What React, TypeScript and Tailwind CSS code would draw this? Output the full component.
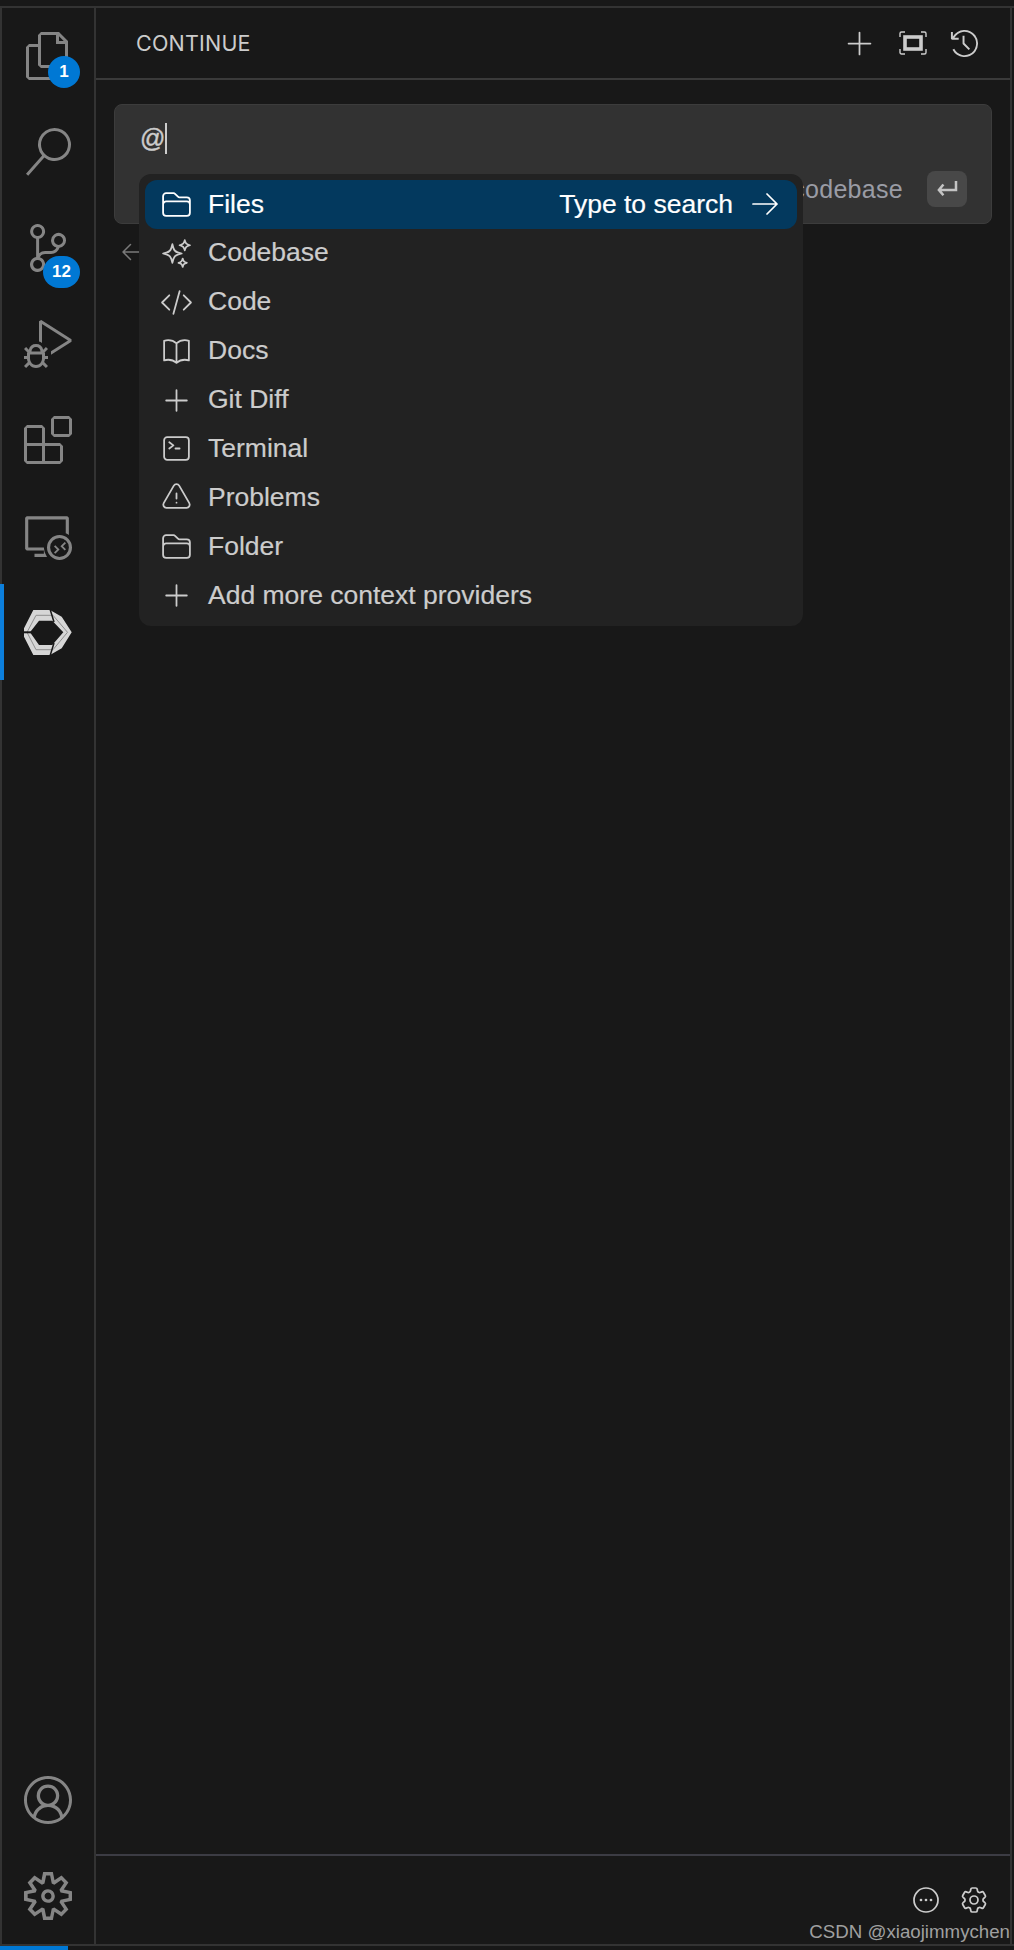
import React from 'react';
import {
  VscFiles,
  VscSearch,
  VscSourceControl,
  VscDebugAlt,
  VscExtensions,
  VscRemoteExplorer,
  VscAccount,
  VscSettingsGear,
  VscHistory,
} from 'react-icons/vsc';
import {
  HiOutlineFolder,
  HiOutlineSparkles,
  HiOutlineCodeBracket,
  HiOutlineBookOpen,
  HiOutlinePlus,
  HiOutlineCommandLine,
  HiOutlineExclamationTriangle,
  HiOutlineArrowRight,
  HiOutlineArrowLeft,
  HiOutlineEllipsisHorizontalCircle,
  HiOutlineCog6Tooth,
} from 'react-icons/hi2';

// Continue logo, hand traced
const ContinueLogo = () => (
  <svg viewBox="0 0 48 48" className="w-12 h-12" fill="none">
    <path
      fillRule="evenodd"
      fill="#d6d6d6"
      d="M9.3 2H26L37.7 8.7L47.7 24.3L37.7 40.3L26 47H9.3L0 28.7V20.3ZM15 12.7L6 24.3L15 37H28.3L39.3 24.3L28.3 12.7Z"
    />
    <path d="M12 7.3H29L43.5 24.3L29 41.7H12L3 24.3Z" stroke="#8f8f8f" strokeWidth="1" />
    <g stroke="#181818">
      <path d="M26 1L30 14M26 48L30 35" strokeWidth="1.5" />
      <path d="M-1 24.3H7" strokeWidth="2" />
    </g>
  </svg>
);

const ActivityItem = ({ children, active, badge }: { children: React.ReactNode; active?: boolean; badge?: string }) => (
  <div className="relative h-24 flex items-center justify-center text-[#858585]">
    {active && <div className="absolute left-[-2px] top-0 bottom-0 w-1 bg-[#0c7fdc]" />}
    {children}
    {badge && (
      <span
        className={`absolute h-8 rounded-full bg-[#0078d4] text-white text-[17px] font-bold flex items-center justify-center ${
          badge.length > 1 ? 'left-[41px] top-[56px] w-[37px]' : 'left-[46px] top-[48px] w-8'
        }`}
      >
        {badge}
      </span>
    )}
  </div>
);

const menuItems = [
  { label: 'Codebase', icon: HiOutlineSparkles },
  { label: 'Code', icon: HiOutlineCodeBracket },
  { label: 'Docs', icon: HiOutlineBookOpen },
  { label: 'Git Diff', icon: HiOutlinePlus },
  { label: 'Terminal', icon: HiOutlineCommandLine },
  { label: 'Problems', icon: HiOutlineExclamationTriangle },
  { label: 'Folder', icon: HiOutlineFolder },
  { label: 'Add more context providers', icon: HiOutlinePlus },
];

export default function App() {
  return (
    <div className="w-[1014px] h-[1950px] bg-[#181818] flex flex-col relative overflow-hidden font-['Liberation_Sans',sans-serif]">
      <div className="mt-[6px] h-[2px] bg-[#333333] shrink-0" />

      <div className="flex flex-1 min-h-0">
        {/* activity bar */}
        <div className="w-24 shrink-0 border-l-2 border-r-2 border-[#333333] flex flex-col justify-between">
          <div>
            <ActivityItem badge="1"><VscFiles size={48} /></ActivityItem>
            <ActivityItem><VscSearch size={48} /></ActivityItem>
            <ActivityItem badge="12"><VscSourceControl size={48} /></ActivityItem>
            <ActivityItem><VscDebugAlt size={48} /></ActivityItem>
            <ActivityItem><VscExtensions size={48} /></ActivityItem>
            <ActivityItem><VscRemoteExplorer size={48} /></ActivityItem>
            <ActivityItem active><ContinueLogo /></ActivityItem>
          </div>
          <div>
            <ActivityItem><VscAccount size={48} /></ActivityItem>
            <ActivityItem><VscSettingsGear size={48} /></ActivityItem>
          </div>
        </div>

        {/* side panel */}
        <div className="w-[914px] shrink-0 flex flex-col">
          <div className="h-[72px] shrink-0 border-b-2 border-[#3a3a3a] pl-10 pr-[30px] flex items-center justify-between text-[#cccccc]">
            <span className="font-['Inter',sans-serif] text-[21.5px] tracking-[0.2px]">CONTINUE</span>
            <div className="flex items-center gap-[22px]">
              <HiOutlinePlus size={35} strokeWidth={1.2} />
              <svg viewBox="0 0 28 24" className="w-7 h-6" fill="none" stroke="currentColor">
                <path d="M1 6V2.5A1.5 1.5 0 0 1 2.5 1H6M22 1h3.5A1.5 1.5 0 0 1 27 2.5V6M27 18v3.5a1.5 1.5 0 0 1-1.5 1.5H22M6 23H2.5A1.5 1.5 0 0 1 1 21.5V18" strokeWidth="1.4" />
                <rect x="6" y="6" width="16" height="12" strokeWidth="3.6" />
              </svg>
              <VscHistory size={31} />
            </div>
          </div>

          <div className="flex-1 min-h-0 px-[18px] pt-6">
            <div className="relative h-[120px] rounded-lg bg-[#323232] border border-[#3c3c3c]">
              <div className="absolute left-[25px] top-[18px] flex items-center text-[25px] text-[#cccccc] h-[31px] [-webkit-text-stroke:0.4px_#cccccc]">
                @<span className="w-[2px] h-[31px] bg-[#cccccc]" />
              </div>
              <div className="absolute right-6 bottom-[15px] flex items-center gap-6">
                <span className="text-[#9a9ca5] text-[25px] tracking-[0.3px]">codebase</span>
                <span className="w-10 h-9 rounded-lg bg-[#484848] flex items-center justify-center">
                  <svg viewBox="0 0 24 20" className="w-[22px] h-[18px]" fill="none" stroke="#c4c4c4" strokeWidth="2.8">
                    <path d="M22 1v10H3M8 5l-5 6 5 6" />
                  </svg>
                </span>
              </div>

              {/* context provider menu */}
              <div className="absolute left-[24px] top-[69px] z-10 w-[664px] p-[6px] rounded-xl bg-[#222222]">
                <div className="h-[48.9px] rounded-[12px] bg-[#03395e] text-white flex items-center pl-[15px] pr-[16px] [-webkit-text-stroke:0.2px_#ffffff]">
                  <HiOutlineFolder size={33} strokeWidth={1.3} />
                  <span className="ml-[15px] text-[26.5px]">Files</span>
                  <span className="ml-auto text-[26.5px]">Type to search</span>
                  <HiOutlineArrowRight size={32} strokeWidth={1.3} className="ml-[16px]" />
                </div>
                {menuItems.map(item => (
                  <div key={item.label} className="h-[48.9px] text-[#cccccc] flex items-center pl-[15px] [-webkit-text-stroke:0.2px_#cccccc]">
                    <item.icon size={33} strokeWidth={1.3} />
                    <span className="ml-[15px] text-[26.5px]">{item.label}</span>
                  </div>
                ))}
              </div>
            </div>
            <div className="mt-4 ml-[6px] text-[#7a7a7a]">
              <HiOutlineArrowLeft size={24} />
            </div>
          </div>

          <div className="h-[90px] shrink-0 border-t-2 border-[#3c3c44] pr-5 pt-[28px] flex justify-end gap-[16px] text-[#cccccc]">
            <HiOutlineEllipsisHorizontalCircle size={32} strokeWidth={1.3} />
            <HiOutlineCog6Tooth size={32} strokeWidth={1.3} />
          </div>
        </div>

        <div className="w-[2px] bg-[#333333] shrink-0" />
      </div>

      <div className="h-[2px] bg-[#333333] shrink-0" />
      <div className="h-1 shrink-0 flex">
        <div className="w-[68px] bg-[#0078d4]" />
      </div>

      <span className="absolute right-[4px] bottom-[7px] text-[18.7px] leading-[22px] text-[#a0a0a0]">CSDN @xiaojimmychen</span>
    </div>
  );
}
